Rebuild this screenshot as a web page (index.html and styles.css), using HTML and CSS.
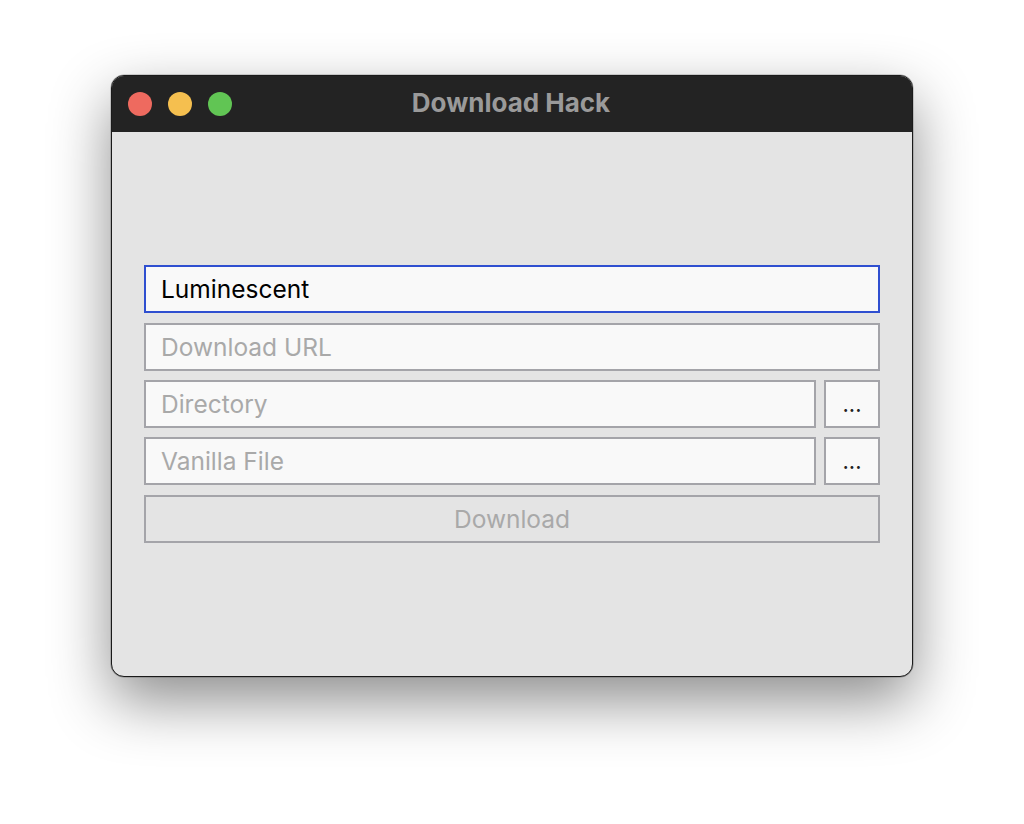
FILE: index.html
```html
<!DOCTYPE html>
<html>
<head>
<meta charset="utf-8">
<link rel="stylesheet" href="styles.css">
</head>
<body>
<div class="window">
  <div class="titlebar">
    <div class="lights">
      <span class="light red"></span>
      <span class="light yellow"></span>
      <span class="light green"></span>
    </div>
    <div class="title">Download Hack</div>
  </div>
  <div class="content">
    <form class="form">
      <div class="field focused">Luminescent</div>
      <div class="field placeholder">Download URL</div>
      <div class="row">
        <div class="field placeholder grow">Directory</div>
        <div class="browse">...</div>
      </div>
      <div class="row">
        <div class="field placeholder grow">Vanilla File</div>
        <div class="browse">...</div>
      </div>
      <div class="button">Download</div>
    </form>
  </div>
</div>
</body>
</html>
```
FILE: styles.css
```css
html, body {
  margin: 0;
  padding: 0;
  background: #ffffff;
}
body {
  min-height: 824px;
  box-sizing: border-box;
  padding: 75px 0 0 111px;
  font-family: Inter, "Liberation Sans", sans-serif;
}
.window {
  width: 800px;
  height: 600px;
  border: 1px solid #1a1a1a;
  border-radius: 13px;
  overflow: hidden;
  background: #e4e4e4;
  box-shadow: 0 24px 60px rgba(0, 0, 0, 0.45), 0 0 0 0.5px rgba(0,0,0,0.3);
  display: flex;
  flex-direction: column;
}
.titlebar {
  height: 56px;
  background: #232323;
  position: relative;
  display: flex;
  align-items: center;
  justify-content: center;
  flex: none;
}
.lights {
  position: absolute;
  left: 16px;
  top: 16px;
  display: flex;
  gap: 16px;
}
.light {
  width: 24px;
  height: 24px;
  border-radius: 50%;
  display: block;
}
.red { background: #ee6a5f; }
.yellow { background: #f5bf4f; }
.green { background: #61c554; }
.title {
  color: #9a9a9a;
  font-weight: 700;
  font-size: 26px;
  margin-left: -2px;
  margin-bottom: 3px;
}
.content {
  flex: 1;
  display: flex;
  align-items: center;
  padding: 0 32px;
}
.form {
  width: 100%;
  display: flex;
  flex-direction: column;
  gap: 9.4px;
}
.row {
  display: flex;
  gap: 8px;
}
.grow { flex: 1; }
.field {
  height: 44px;
  border: 2px solid #a4a4a9;
  background: #f9f9f9;
  display: flex;
  align-items: center;
  padding: 0 15px;
  font-size: 24.5px;
  color: #000;
}
.field.focused {
  border-color: #2f4fd0;
}
.placeholder {
  color: #a9a9a9;
}
.browse {
  width: 52px;
  height: 44px;
  border: 2px solid #a4a4a9;
  background: #f9f9f9;
  display: flex;
  align-items: center;
  justify-content: center;
  font-size: 22px;
  color: #222;
}
.button {
  height: 44px;
  border: 2px solid #a4a4a9;
  background: #e4e4e4;
  display: flex;
  align-items: center;
  justify-content: center;
  font-size: 24.5px;
  color: #a9a9a9;
}
```
